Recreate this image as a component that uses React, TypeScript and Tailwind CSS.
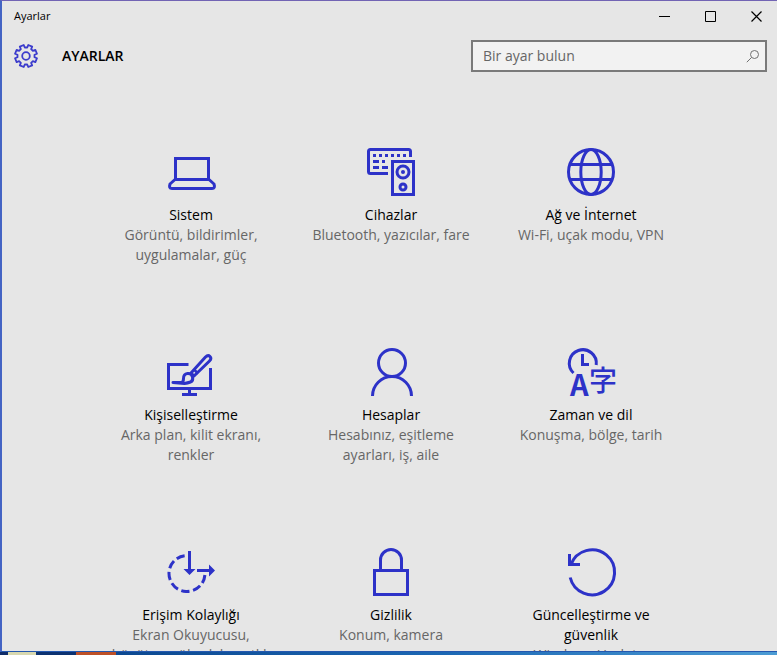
import type { ReactNode } from "react";

function Icon({ children }: { children: ReactNode }) {
  return (
    <svg
      viewBox="0 0 48 48"
      className="size-12 shrink-0 overflow-visible text-[#2d32c8]"
      fill="none"
      stroke="currentColor"
      strokeWidth="3"
      aria-hidden="true"
    >
      {children}
    </svg>
  );
}

const SystemIcon = () => (
  <Icon>
    <path d="M8.5 31V10.5h33V31" />
    <path d="M8 31.5h34l5 4.5q1.5 4.5-2 4.5H5q-3.5 0-2-4.5z" strokeLinejoin="round" />
  </Icon>
);

const DevicesIcon = () => (
  <Icon>
    <path d="M43.5 9V3.5q0-2-2-2h-38q-2 0-2 2v20q0 2 2 2H21" />
    <path d="M6 7.5h3m3 0h3m3 0h3m3 0h3m3 0h3m3 0h3M6 13.5h6m3 0h3M6 19.5h6m3 0h6" />
    <rect x="25.5" y="13.5" width="21" height="33" />
    <circle cx="36" cy="24" r="6" />
    <circle cx="36" cy="24" r="2" fill="currentColor" stroke="none" />
    <circle cx="36" cy="39" r="3" />
  </Icon>
);

const GlobeIcon = () => (
  <Icon>
    <circle cx="24" cy="24" r="22.5" />
    <ellipse cx="24" cy="24" rx="10.2" ry="22.5" />
    <path d="M3 16.5h42M3 31.5h42" />
  </Icon>
);

const PersonalizationIcon = () => (
  <Icon>
    <path d="M21.5 16.5h-20v24h42V20" />
    <path d="M22.5 41v5M15 46.5h15" />
    <path d="M24 25 38.500 9q2.5-2.5 4.5-.5t-.5 4.5L27 28z" strokeLinejoin="round" />
    <path d="m27 21.5 4 4" strokeWidth="2.5" />
    <path d="M6 34.5h8q2.5 0 2.5-4 0-4.500 4-5t5 3.500-2 5-6 1.500z" strokeLinejoin="round" />
  </Icon>
);

const AccountsIcon = () => (
  <Icon>
    <circle cx="25" cy="15" r="13.5" />
    <path d="M5.5 48a19.5 19.5 0 0 1 39 0" />
  </Icon>
);

const TimeIcon = () => (
  <Icon>
    <path d="M6.5 25A13.5 13.5 0 1 1 29.2 17" />
    <path d="M15.5 6v10.5H22" />
    <g fill="currentColor" stroke="none">
      <text x="3" y="48" className="font-['Noto_Sans_CJK_JP',sans-serif] text-[29px] font-bold">
        A
      </text>
      <text x="22" y="43" className="font-['Noto_Sans_CJK_JP',sans-serif] text-[28px] font-medium">
        字
      </text>
    </g>
  </Icon>
);

const AccessIcon = () => (
  <Icon>
    <path d="M37.9 27a18 18 0 1 1-18.4-19.5" strokeDasharray="8.4 3.6" />
    <path d="M22.5 3v19M30 22.500h13" />
    <path d="M16.5 21h12l-6 6zM42 16.5v12l6-6z" fill="currentColor" stroke="none" />
  </Icon>
);

const PrivacyIcon = () => (
  <Icon>
    <rect x="7.5" y="22.5" width="33" height="24" />
    <path d="M13.5 22V12a10.5 10.5 0 0 1 21 0v10" />
  </Icon>
);

const UpdateIcon = () => (
  <Icon>
    <path d="M3.2 29.5A22.5 22.5 0 1 0 4 16.5" />
    <path d="M2.5 6v10.5H13" />
  </Icon>
);

const categories = [
  { title: "Sistem", detail: "Görüntü, bildirimler, uygulamalar, güç", icon: SystemIcon },
  { title: "Cihazlar", detail: "Bluetooth, yazıcılar, fare", icon: DevicesIcon },
  { title: "Ağ ve İnternet", detail: "Wi-Fi, uçak modu, VPN", icon: GlobeIcon },
  { title: "Kişiselleştirme", detail: "Arka plan, kilit ekranı, renkler", icon: PersonalizationIcon },
  { title: "Hesaplar", detail: "Hesabınız, eşitleme ayarları, iş, aile", icon: AccountsIcon },
  { title: "Zaman ve dil", detail: "Konuşma, bölge, tarih", icon: TimeIcon },
  { title: "Erişim Kolaylığı", detail: "Ekran Okuyucusu, büyüteç, yüksek karşıtlık", icon: AccessIcon },
  { title: "Gizlilik", detail: "Konum, kamera", icon: PrivacyIcon },
  { title: "Güncelleştirme ve güvenlik", detail: "Windows Update, kurtarma, yedekleme", icon: UpdateIcon },
];

function gearPath() {
  const points: string[] = [];
  for (let i = 0; i < 8; i++) {
    const center = (i * Math.PI) / 4 + Math.PI / 8;
    for (const [offset, radius] of [[-0.25, 8.6], [-0.19, 11.2], [0.19, 11.2], [0.25, 8.6]]) {
      points.push(`${12 + radius * Math.cos(center + offset)} ${12 + radius * Math.sin(center + offset)}`);
    }
  }
  return `M${points.join("L")}Z`;
}

export default function App() {
  return (
    <div className="flex h-screen flex-col overflow-hidden bg-[#12509c] font-['Open_Sans','Noto_Sans',sans-serif] text-black">
      <div className="flex min-h-0 flex-1 flex-col border-t border-b border-l-2 border-t-[#7264b4] border-b-[#2458b0] border-l-[#4464c4] bg-[#e6e6e6]">
        <div className="flex h-[30px] shrink-0 items-center justify-between pl-3">
          <span className="text-[11px] leading-4">Ayarlar</span>
          <div className="flex h-full gap-1">
            <button aria-label="Simge durumuna küçült" className="flex w-[42px] items-center justify-center">
              <svg className="size-[11px]" viewBox="0 0 11 11" stroke="currentColor"><path d="M0 5.5h11" /></svg>
            </button>
            <button aria-label="Ekranı kapla" className="flex w-[42px] items-center justify-center">
              <svg className="size-[11px]" viewBox="0 0 11 11" fill="none" stroke="currentColor"><path d="M.5.5h10v10H.5z" /></svg>
            </button>
            <button aria-label="Kapat" className="flex w-[42px] items-center justify-center">
              <svg className="size-[11px]" viewBox="0 0 11 11" stroke="currentColor" strokeWidth="1.2"><path d="m.5.5 10 10m0-10-10 10" /></svg>
            </button>
          </div>
        </div>

        <header className="flex h-[50px] shrink-0 items-center justify-between pr-[10px] pl-3">
          <div className="flex items-center gap-6">
            <svg className="size-6 text-[#3c3ccc]" viewBox="0 0 24 24" fill="none" stroke="currentColor" strokeWidth="1.8" strokeLinejoin="round" aria-hidden="true">
              <path d={gearPath()} />
              <circle cx="12" cy="12" r="3.8" />
            </svg>
            <h1 className="text-[14px] leading-5 font-semibold">AYARLAR</h1>
          </div>
          <label className="flex h-8 w-[296px] items-center border-2 border-[#7a7a7a] bg-[#f2f2f2] pr-[5px] pl-[10px]">
            <input
              type="text"
              aria-label="Bir ayar bulun"
              placeholder="Bir ayar bulun"
              className="min-w-0 flex-1 bg-transparent text-[14px] leading-5 outline-none placeholder:text-[#666666]"
            />
            <svg className="size-[14px] text-[#707070]" viewBox="0 0 14 14" fill="none" stroke="currentColor" aria-hidden="true">
              <circle cx="8.5" cy="5.5" r="4" />
              <path d="M5.5 8.5.8 13.2" />
            </svg>
          </label>
        </header>

        <main className="min-h-0 flex-1 overflow-hidden pt-[57px] pr-16 pl-[67px]">
          <nav aria-label="Ayarlar" className="grid auto-rows-[200px] grid-cols-[repeat(auto-fill,200px)] justify-center">
            {categories.map(({ title, detail, icon: CategoryIcon }) => (
              <a key={title} href="#" className="flex flex-col items-center px-5 pt-[10px] text-center text-[14px] leading-5">
                <CategoryIcon />
                <span className="mt-[9px]">{title}</span>
                <span className="text-[#666666]">{detail}</span>
              </a>
            ))}
          </nav>
        </main>
      </div>
      <div className="flex h-[3px] shrink-0">
        <div className="w-2 bg-[#102c68]" />
        <div className="w-7 bg-[#d8d8b0]" />
        <div className="w-10 bg-[#0c3270]" />
        <div className="w-10 bg-[#bc5028]" />
        <div className="flex-1 bg-linear-to-r from-[#0c4890] via-[#1c68b4] to-[#4c9cd4]" />
      </div>
    </div>
  );
}
